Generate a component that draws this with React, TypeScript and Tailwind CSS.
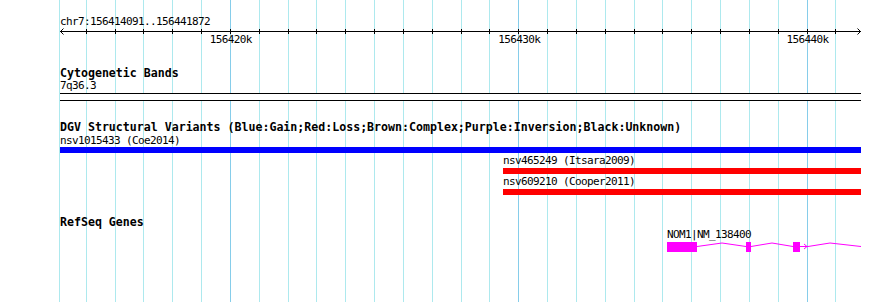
import React from 'react'

const START = 156414091
const END = 156441872
const LEFT = 60
const WIDTH = 801

const px = (bp: number) => LEFT + ((bp - START) * WIDTH) / (END - START)

const TICKS = Array.from({ length: 27 }, (_, i) => 156415000 + i * 1000)
const MAJORS = [156420000, 156430000, 156440000]

function GridLines() {
  return (
    <svg className="absolute inset-0" width={890} height={302} shapeRendering="crispEdges">
      <rect x={59} y={0} width={1} height={302} fill="#ade9ee" />
      {TICKS.map((bp) => (
        <rect
          key={bp}
          x={Math.floor(px(bp))}
          y={0}
          width={1}
          height={302}
          fill={bp % 10000 === 0 ? '#86cdea' : '#ade9ee'}
        />
      ))}
    </svg>
  )
}

function Axis() {
  return (
    <svg width={890} height={8} className="block" shapeRendering="crispEdges">
      <rect x={60} y={4} width={801} height={1} fill="#000" />
      {TICKS.map((bp) => (
        <rect key={bp} x={Math.floor(px(bp))} y={2} width={1} height={5} fill="#000" />
      ))}
      <path d="M63.5 1.5 L60.5 4.5 L63.5 7.5" fill="none" stroke="#000" shapeRendering="auto" />
      <path d="M857.5 1.5 L860.5 4.5 L857.5 7.5" fill="none" stroke="#000" shapeRendering="auto" />
    </svg>
  )
}

function Title({ children, className = '' }: { children: React.ReactNode; className?: string }) {
  return <div className={`pl-[60px] text-[11.6px] leading-[12px] font-bold whitespace-pre ${className}`}>{children}</div>
}

// small text: 6px per character like the browser's bitmap font
function Label({ children, className = '' }: { children: React.ReactNode; className?: string }) {
  return <div className={`text-[11px] leading-[10px] tracking-[-0.62px] whitespace-pre ${className}`}>{children}</div>
}

function Gene() {
  const c = '#ff00ff'
  return (
    <svg width={801} height={10} className="block ml-[60px]">
      <g fill={c} shapeRendering="crispEdges">
        <rect x={607} y={0} width={30} height={10} />
        <rect x={686} y={0} width={5} height={10} />
        <rect x={733} y={0} width={7} height={10} />
      </g>
      <g fill="none" stroke={c} strokeWidth={1}>
        <polyline points="637,4.5 662,1 686,4.5" />
        <polyline points="691,4.5 712,1 733,4.5" />
        <polyline points="740,4.5 748,4.5 770,1 801,4.5" />
        <polyline points="744,2 747,4.5 744,7" />
      </g>
    </svg>
  )
}

export default function App() {
  return (
    <div className="relative w-[890px] h-[302px] overflow-hidden bg-white text-black font-['DejaVu_Sans_Mono','Liberation_Mono',monospace]">
      <GridLines />
      <div className="relative flex flex-col">
        <Label className="pt-[17px] pl-[60px]">chr7:156414091..156441872</Label>
        <Axis />
        <div className="relative h-[10px] text-[11px] leading-[10px] tracking-[-0.62px]">
          {MAJORS.map((bp) => (
            <span key={bp} className="absolute top-0 -translate-x-1/2" style={{ left: px(bp) + 0.5 }}>
              {bp / 1000}k
            </span>
          ))}
        </div>

        <Title className="mt-[22px]">Cytogenetic Bands</Title>
        <Label className="mt-[2px] pl-[60px]">7q36.3</Label>
        <div className="mt-[2px] ml-[60px] w-[801px] h-[8px] border-y border-black bg-white" />

        <Title className="mt-[20px]">
          DGV Structural Variants (Blue:Gain;Red:Loss;Brown:Complex;Purple:Inversion;Black:Unknown)
        </Title>
        <Label className="mt-[3px] pl-[60px]">nsv1015433 (Coe2014)</Label>
        <div className="mt-[1px] ml-[60px] w-[801px] h-[6px] bg-[#0000ff]" />
        <Label className="mt-[3px] pl-[503px]">nsv465249 (Itsara2009)</Label>
        <div className="mt-[2px] ml-[503px] w-[358px] h-[6px] bg-[#ff0000]" />
        <Label className="mt-[3px] pl-[503px]">nsv609210 (Cooper2011)</Label>
        <div className="mt-[2px] ml-[503px] w-[358px] h-[6px] bg-[#ff0000]" />

        <Title className="mt-[21px]">RefSeq Genes</Title>
        <Label className="mt-[2px] pl-[667px]">NOM1|NM_138400</Label>
        <div className="mt-[2px]">
          <Gene />
        </div>
      </div>
    </div>
  )
}
